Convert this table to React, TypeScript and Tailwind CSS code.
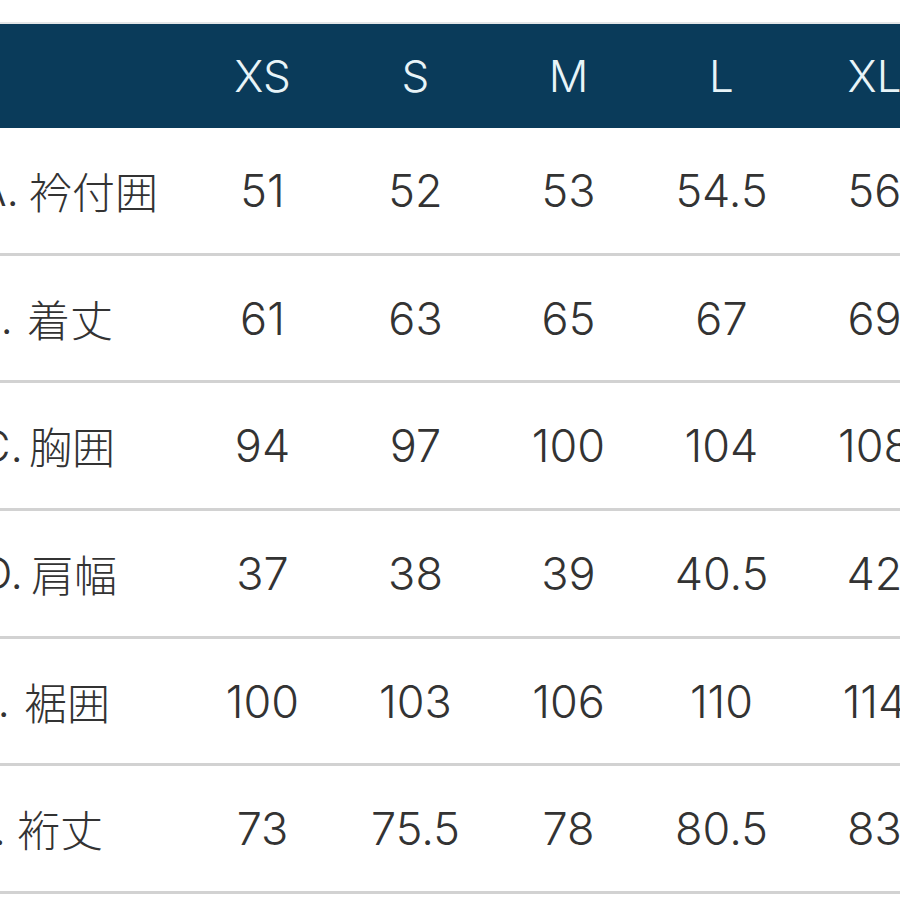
const sizes = ['XS', 'S', 'M', 'L', 'XL'];

// prefix/label offsets follow the cropped left edge of the original table
const rows = [
  { key: 'A', name: '衿付囲', pre: 'ml-[-41px]', gap: 'ml-[10px]', values: ['51', '52', '53', '54.5', '56'] },
  { key: 'B', name: '着丈', pre: 'ml-[-47px]', gap: 'ml-[14px]', values: ['61', '63', '65', '67', '69'] },
  { key: 'C', name: '胸囲', pre: 'ml-[-37px]', gap: 'ml-[6px]', values: ['94', '97', '100', '104', '108'] },
  { key: 'D', name: '肩幅', pre: 'ml-[-37px]', gap: 'ml-[8px]', values: ['37', '38', '39', '40.5', '42'] },
  { key: 'E', name: '裾囲', pre: 'ml-[-50px]', gap: 'ml-[14px]', values: ['100', '103', '106', '110', '114'] },
  { key: 'F', name: '裄丈', pre: 'ml-[-54px]', gap: 'ml-[11px]', values: ['73', '75.5', '78', '80.5', '83'] },
];

export default function App() {
  return (
    <div
      className="w-[900px] h-[900px] bg-white overflow-hidden pt-[22px]"
      style={{ fontFamily: 'Inter, "Liberation Sans", "Noto Sans CJK JP", sans-serif' }}
    >
      <div className="w-[951px] border-t-2 border-[#e4e6e8]">
        {/* Header */}
        <div className="grid grid-cols-[186px_repeat(5,153px)] h-[104px] bg-[#0a3b5a] text-[#e8f4f8] text-[44px] font-light">
          <div />
          {sizes.map((s) => (
            <div key={s} className="flex items-center justify-center leading-none">
              {s}
            </div>
          ))}
        </div>

        {/* Rows */}
        {rows.map((r) => (
          <div
            key={r.key}
            className="grid grid-cols-[186px_repeat(5,153px)] h-[127.7px] border-b-[3px] border-[#d2d2d2] text-[#333] text-[45px] font-light"
          >
            <div className="flex items-center leading-none whitespace-nowrap">
              <span className={`inline-block w-[60px] text-right shrink-0 text-[44px] ${r.pre}`}>{r.key}.</span>
              <span
                className={`text-[43px] ${r.gap}`}
                style={{ fontFamily: '"Noto Sans CJK JP", sans-serif' }}
              >
                {r.name}
              </span>
            </div>
            {r.values.map((v, i) => (
              <div key={i} className="flex items-center justify-center leading-none">
                {v}
              </div>
            ))}
          </div>
        ))}
      </div>
    </div>
  );
}
